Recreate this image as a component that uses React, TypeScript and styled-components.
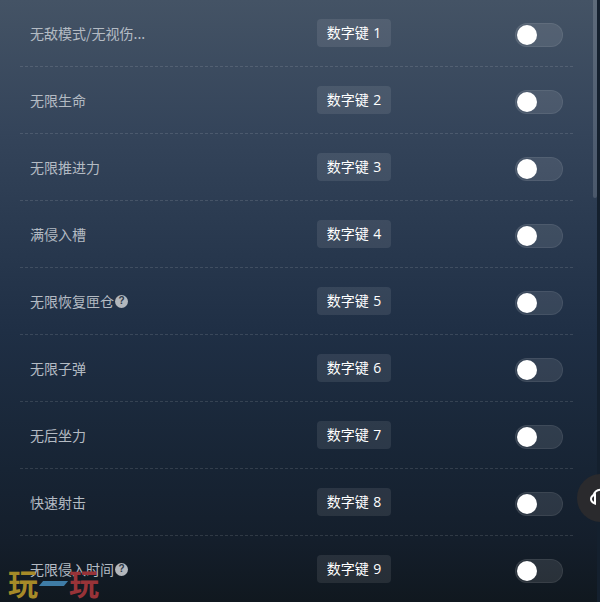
import React from "react";
import styled, { createGlobalStyle } from "styled-components";

const Global = createGlobalStyle`
  html, body { margin: 0; padding: 0; background: #111820; }
  body { font-family: "Noto Sans CJK SC", "Noto Sans", sans-serif; }
`;

const Page = styled.div`
  position: relative;
  width: 600px;
  height: 602px;
  overflow: hidden;
  background: linear-gradient(180deg, #445365 0%, #34445a 22%, #1f2f45 55%, #172434 78%, #141e2b 90%, #10181f 100%);
`;

const List = styled.ul`
  list-style: none;
  margin: 0;
  padding: 0 27px 0 20px;
`;

const Row = styled.li`
  display: grid;
  grid-template-columns: 287px 198px 48px;
  align-items: center;
  height: 67px;
  box-sizing: border-box;
  padding-left: 10px;
  border-bottom: 1px dashed rgba(255, 255, 255, 0.12);
`;

const Name = styled.div`
  display: flex;
  align-items: center;
  font-size: 14px;
  line-height: 20px;
  color: #b4bbc3;
  white-space: nowrap;
`;

const Help = styled.span`
  display: inline-flex;
  align-items: center;
  justify-content: center;
  width: 13px;
  height: 13px;
  margin-left: 1px;
  border-radius: 50%;
  background: #b3b7bc;
  color: #2a3645;
  font-family: "Liberation Sans", sans-serif;
  font-size: 10px;
  font-weight: 700;
`;

const Key = styled.div`
  justify-self: start;
  box-sizing: border-box;
  width: 74px;
  height: 28px;
  border-radius: 4px;
  background: rgba(255, 255, 255, 0.09);
  color: #fff;
  font-family: "Open Sans", "Noto Sans CJK SC", sans-serif;
  font-size: 14px;
  line-height: 28px;
  word-spacing: 1px;
  text-align: center;
  white-space: nowrap;
`;

const Toggle = styled.div`
  position: relative;
  box-sizing: border-box;
  width: 48px;
  height: 24px;
  margin-top: 4px;
  border-radius: 12px;
  background: rgba(255, 255, 255, 0.1);
  border: 1px solid rgba(255, 255, 255, 0.07);
`;

const Knob = styled.span`
  position: absolute;
  left: 1px;
  top: 1px;
  width: 20px;
  height: 20px;
  border-radius: 50%;
  background: #fff;
`;

const Track = styled.div`
  position: absolute;
  right: 0;
  top: 0;
  width: 3px;
  height: 100%;
  background: #14202e;
`;

const Thumb = styled.div`
  position: absolute;
  left: 593px;
  top: 0;
  width: 4px;
  height: 198px;
  border-radius: 0 0 2px 2px;
  background: rgba(255, 255, 255, 0.14);
`;

const Float = styled.div`
  position: absolute;
  left: 577px;
  top: 474px;
  width: 48px;
  height: 48px;
  border-radius: 50%;
  background: #2a2a2d;
  color: #fff;
  display: flex;
  align-items: center;
  padding-left: 12px;
  box-sizing: border-box;
`;

const Logo = styled.div`
  position: absolute;
  left: 8px;
  top: 567px;
  display: flex;
  align-items: center;
  height: 30px;
  font-family: "Noto Sans CJK SC", sans-serif;
  font-size: 30px;
  font-weight: 700;
  line-height: 30px;
`;

const LogoChar = styled.span<{ $color: string }>`
  color: ${(p) => p.$color};
`;

const LogoDash = styled.span`
  display: block;
  width: 25px;
  height: 5px;
  margin: 3px 3px 0 3px;
  background: #3f7ca6;
  transform: skewX(-40deg);
`;

const rows: { name: string; help?: boolean; key: string }[] = [
  { name: "无敌模式/无视伤...", key: "数字键 1" },
  { name: "无限生命", key: "数字键 2" },
  { name: "无限推进力", key: "数字键 3" },
  { name: "满侵入槽", key: "数字键 4" },
  { name: "无限恢复匣仓", help: true, key: "数字键 5" },
  { name: "无限子弹", key: "数字键 6" },
  { name: "无后坐力", key: "数字键 7" },
  { name: "快速射击", key: "数字键 8" },
  { name: "无限侵入时间", help: true, key: "数字键 9" },
];

export default function App() {
  return (
    <Page>
      <Global />
      <Logo>
        <LogoChar $color="#a68a28">玩</LogoChar>
        <LogoDash />
        <LogoChar $color="#983338">玩</LogoChar>
      </Logo>
      <List>
        {rows.map((r) => (
          <Row key={r.key}>
            <Name>
              {r.name}
              {r.help && <Help>?</Help>}
            </Name>
            <Key>{r.key}</Key>
            <Toggle>
              <Knob />
            </Toggle>
          </Row>
        ))}
      </List>
      <Track />
      <Thumb />
      <Float>
        <svg width="24" height="24" viewBox="0 0 24 24" fill="none" stroke="currentColor" strokeWidth="2">
          <path d="M4.5 9a8 8 0 0 1 15 0" />
          <path d="M6 8.5C3.5 9.5 2 11 2 13c0 2 1.500 3.500 4 4.500Z" />
          <path d="M18 8.500c2.500 1 4 2.500 4 4.500s-1.500 3.500-4 4.500Z" />
        </svg>
      </Float>
    </Page>
  );
}
